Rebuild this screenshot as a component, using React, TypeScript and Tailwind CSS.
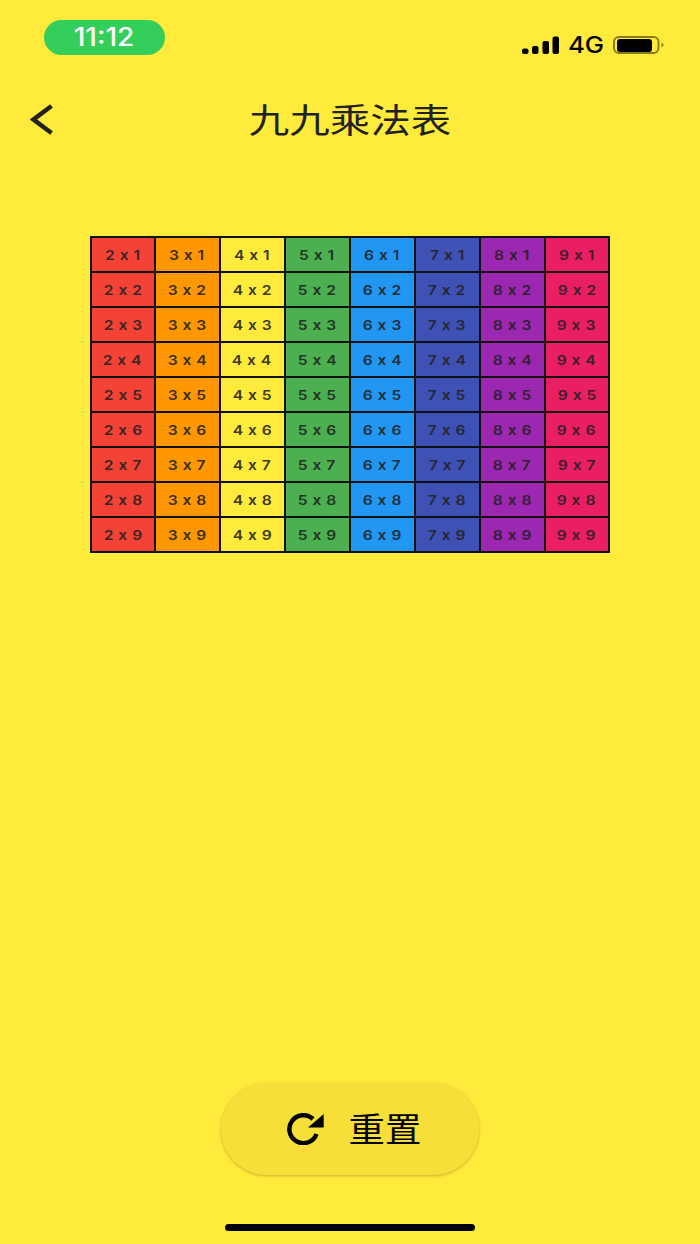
const cols = [
  { n: 2, bg: "bg-[#f44336]" },
  { n: 3, bg: "bg-[#ff9800]" },
  { n: 4, bg: "bg-[#ffeb3b]" },
  { n: 5, bg: "bg-[#4caf50]" },
  { n: 6, bg: "bg-[#2196f3]" },
  { n: 7, bg: "bg-[#3f51b5]" },
  { n: 8, bg: "bg-[#9c27b0]" },
  { n: 9, bg: "bg-[#e91e63]" },
]
const rows = [1, 2, 3, 4, 5, 6, 7, 8, 9]

function SignalIcon() {
  return (
    <svg width="37" height="18" viewBox="0 0 37 18" fill="#000">
      <rect x="0" y="12.5" width="6.5" height="5.5" rx="2" />
      <rect x="10" y="10" width="6.5" height="8" rx="2" />
      <rect x="20.5" y="5" width="6.5" height="13" rx="2" />
      <rect x="30.5" y="0.5" width="6.5" height="17.5" rx="2" />
    </svg>
  )
}

function BatteryIcon() {
  return (
    <svg width="52" height="18" viewBox="0 0 52 18">
      <rect x="1" y="1" width="44.5" height="16" rx="5" fill="none" stroke="#8a7d18" strokeWidth="2" />
      <rect x="4" y="3" width="35" height="13" rx="3" fill="#000" />
      <path d="M48.5 6.5 L51 8.8 L48.5 11.5 Z" fill="#8a7d18" />
    </svg>
  )
}

function ResetIcon() {
  return (
    <svg width="38" height="32" viewBox="0 0 38 32" fill="none">
      <path d="M30.5 21 A14 14 0 1 1 27 6" stroke="#000" strokeWidth="4.5" />
      <path d="M37.7 1 L37.7 14.5 L22 14.5 Z" fill="#000" />
    </svg>
  )
}

export default function App() {
  return (
    <div className="w-[700px] h-[1244px] bg-[#ffeb3b] flex flex-col overflow-hidden font-['Inter','Noto_Sans_CJK_SC',sans-serif]">
      <div className="flex items-start justify-between pt-5 pl-11 pr-[35px] h-[96px]">
        <div className="w-[121px] h-[35px] rounded-full bg-[#34ce5b] flex items-center justify-center text-white text-[25px] font-medium">
          <span className="inline-block scale-x-[1.12]">11:12</span>
        </div>
        <div className="flex items-center gap-[10px] mt-4 -ml-px">
          <SignalIcon />
          <span className="inline-block w-[34px] text-center text-[23px] leading-[18px] font-medium text-black scale-x-[1.12]">4G</span>
          <BatteryIcon />
        </div>
      </div>

      <div className="relative flex items-center justify-center h-[48px]">
        <svg className="absolute left-[30px] top-[8px]" width="23" height="31" viewBox="0 0 23 31" fill="none">
          <path d="M21.5 2 L3.5 15.5 L21.5 29" stroke="#212121" strokeWidth="4.5" />
        </svg>
        <h1 className="pb-1 text-[34px] font-normal text-[#212121] font-['Noto_Sans_CJK_SC',sans-serif] scale-x-[1.19]">九九乘法表</h1>
      </div>

      <div className="mt-[92px] mx-[90px] grid grid-cols-[63.5px_repeat(6,65px)_64.5px] border-t-2 border-l-2 border-[#111]">
        {rows.map((r) =>
          cols.map((c) => (
            <div
              key={`${c.n}-${r}`}
              className={`h-[35px] pt-[2px] flex items-center justify-center border-r-2 border-b-2 border-[#111] text-[#212121]/90 text-[13px] font-semibold tracking-[0.4px] ${c.bg}`}
            >
              <span className="inline-block scale-x-[1.2] whitespace-pre">{c.n} x {r}</span>
            </div>
          ))
        )}
      </div>

      <div className="flex-1" />

      <div className="flex justify-center">
        <button className="w-[258px] h-[92px] pl-[5px] rounded-full bg-[#f7df3a] shadow-[0_1px_3px_rgba(0,0,0,0.25)] flex items-center justify-center gap-[27px] text-black">
          <ResetIcon />
          <span className="pb-1 text-[34px] font-normal font-['Noto_Sans_CJK_SC',sans-serif] scale-x-[1.07]">重置</span>
        </button>
      </div>

      <div className="flex justify-center mt-[49px] mb-[13px]">
        <div className="w-[250px] h-[7px] rounded-full bg-black" />
      </div>
    </div>
  )
}
